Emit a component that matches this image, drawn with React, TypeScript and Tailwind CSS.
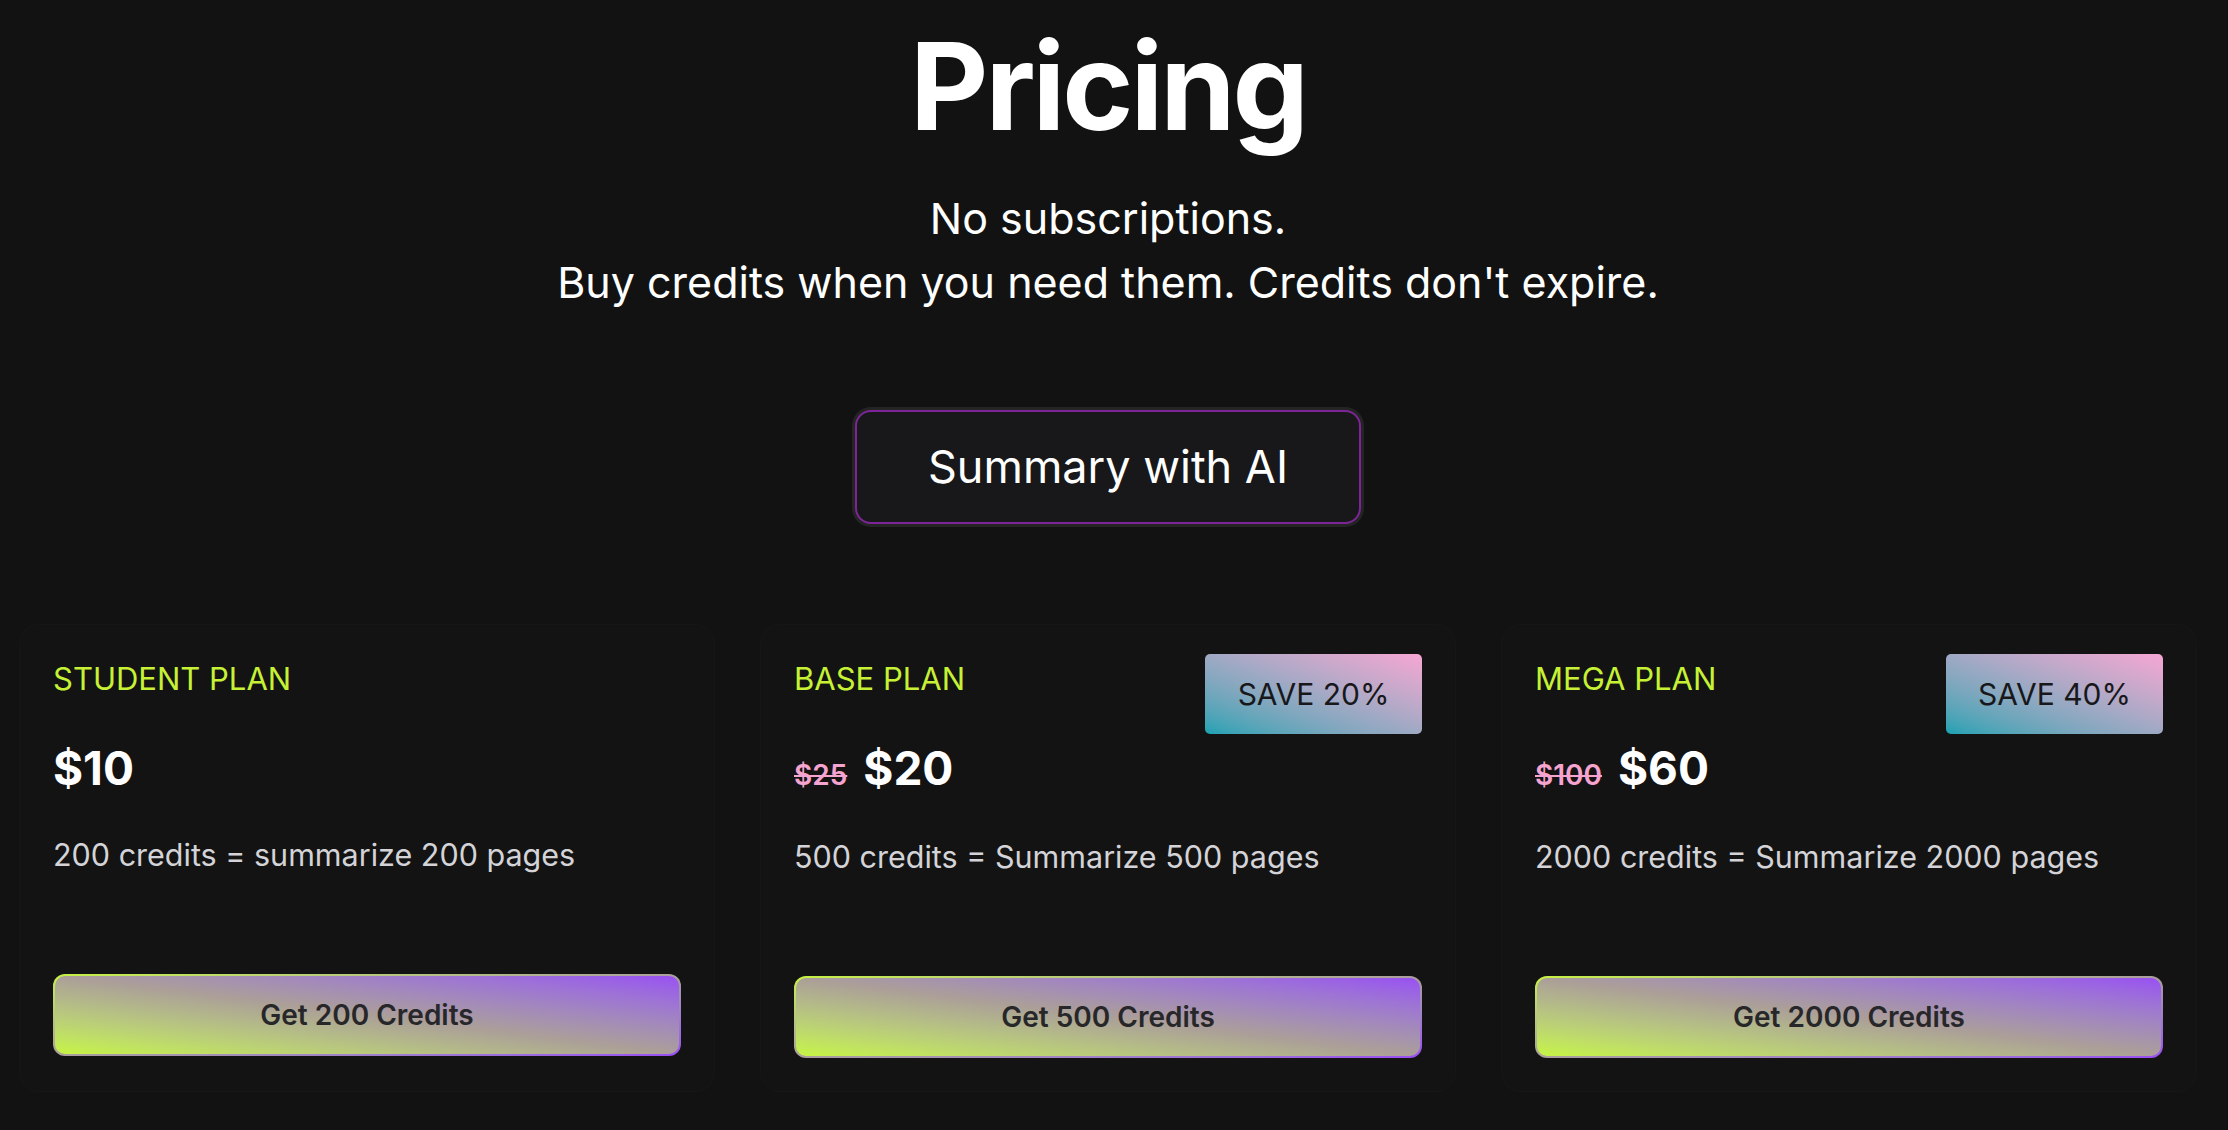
import React from 'react';

type Plan = {
  name: string;
  price: string;
  oldPrice?: string;
  save?: string;
  blurb: string;
  cta: string;
};

const plans: Plan[] = [
  { name: 'STUDENT PLAN', price: '$10', blurb: '200 credits = summarize 200 pages', cta: 'Get 200 Credits' },
  { name: 'BASE PLAN', price: '$20', oldPrice: '$25', save: 'SAVE 20%', blurb: '500 credits = Summarize 500 pages', cta: 'Get 500 Credits' },
  { name: 'MEGA PLAN', price: '$60', oldPrice: '$100', save: 'SAVE 40%', blurb: '2000 credits = Summarize 2000 pages', cta: 'Get 2000 Credits' },
];

const PlanCard: React.FC<{ plan: Plan }> = ({ plan }) => (
  <div className="rounded-[20px] border border-white/[0.015] bg-[#131313] px-[33px] pt-[29px] pb-[33px]">
    <div className="flex h-[80px] items-start justify-between">
      <span className="pt-[5px] text-[31px] leading-[40px] text-[#c6f135]">{plan.name}</span>
      {plan.save && (
        <span className="flex h-[80px] w-[217px] items-center justify-center rounded-[5px] bg-linear-to-tr from-[#12a2b3] via-[#9fa9c4] to-[#f6a6d3] text-[30px] text-[#18181b]">
          {plan.save}
        </span>
      )}
    </div>

    <div className="mt-[8px] flex items-baseline gap-[16px]">
      {plan.oldPrice && (
        <span className="text-[28px] font-semibold text-[#f5a3cf] line-through">{plan.oldPrice}</span>
      )}
      <span className="text-[46px] font-bold leading-[52px] text-white">{plan.price}</span>
    </div>

    <p className="mt-[41px] text-[30.5px] leading-[40px] text-[#d4d4d8]">{plan.blurb}</p>

    <div className="mt-[99px] rounded-[12px] bg-linear-to-br from-[#c6f23e] via-[#aa9f9c] to-[#9a4cf5] p-[2px]">
      <button className="flex h-[78px] w-full items-center justify-center rounded-[10px] bg-linear-to-tr from-[#c6f540] via-[#ab9f98] to-[#994ff2] text-[28px] font-semibold text-[#27272a]">
        {plan.cta}
      </button>
    </div>
  </div>
);

export default function App() {
  return (
    <div className="min-h-screen bg-[#121212] pl-[19px] pr-[31px] font-['Inter',sans-serif] text-white">
      <header className="flex flex-col items-center pt-[26px]">
        <h1 className="text-[121px] font-bold leading-none tracking-tight">Pricing</h1>
        <p className="mt-[39px] text-center text-[43px] leading-[64px]">
          No subscriptions.
          <br />
          Buy credits when you need them. Credits don't expire.
        </p>
        <button className="mt-[96px] h-[114px] w-[506px] rounded-[16px] border-2 border-[#7d2598] bg-[#18181b] text-[45px] ring-[3px] ring-[#242424]">
          Summary with AI
        </button>
      </header>

      <section className="mt-[100px] grid grid-cols-3 gap-[45px]">
        {plans.map((p) => (
          <PlanCard key={p.name} plan={p} />
        ))}
      </section>
    </div>
  );
}
